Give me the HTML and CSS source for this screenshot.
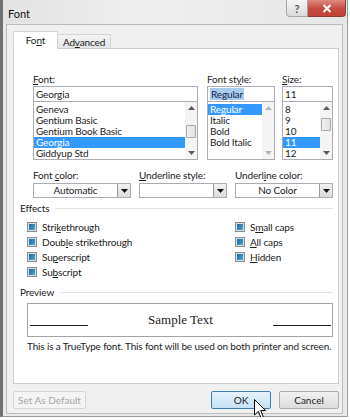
FILE: index.html
```html
<!DOCTYPE html>
<html lang="en">
<head>
  <meta charset="UTF-8" />
  <title>Font</title>
  <link rel="stylesheet" href="styles.css">
</head>
<body>
  <div class="window">
    <div class="titlebar">
      <span class="title">Font</span>
      <div class="caption">
        <span class="cap-btn help">?</span>
        <span class="cap-btn close">
          <svg width="10" height="9" viewBox="0 0 10 9"><path d="M1.5 1 L8.5 8 M8.5 1 L1.5 8" stroke="#fff" stroke-width="2"/></svg>
        </span>
      </div>
    </div>

    <div class="client">
      <div class="tabs">
        <div class="tab active"><span>Fo<u>n</u>t</span></div>
        <div class="tab"><span>Ad<u>v</u>anced</span></div>
      </div>

      <div class="panel">
        <div class="font-row">
          <div class="field f-name">
            <span class="lbl"><u>F</u>ont:</span>
            <div class="textbox">Georgia</div>
            <div class="listbox">
              <ul>
                <li>Geneva</li>
                <li>Gentium Basic</li>
                <li>Gentium Book Basic</li>
                <li class="sel">Georgia</li>
                <li>Giddyup Std</li>
              </ul>
              <div class="sb">
                <span class="sb-arrow"><svg width="7" height="4" viewBox="0 0 7 4"><path d="M0 4 L3.5 0 L7 4 Z" fill="#5a5a5a"/></svg></span>
                <span class="thumb t-name"></span>
                <span class="sb-fill"></span>
                <span class="sb-arrow"><svg width="7" height="4" viewBox="0 0 7 4"><path d="M0 0 L3.5 4 L7 0 Z" fill="#5a5a5a"/></svg></span>
              </div>
            </div>
          </div>

          <div class="field f-style">
            <span class="lbl">Font st<u>y</u>le:</span>
            <div class="textbox"><span class="hl">Regular</span></div>
            <div class="listbox">
              <ul>
                <li class="sel">Regular</li>
                <li>Italic</li>
                <li>Bold</li>
                <li>Bold Italic</li>
              </ul>
              <div class="sb">
                <span class="sb-arrow"><svg width="7" height="4" viewBox="0 0 7 4"><path d="M0 4 L3.5 0 L7 4 Z" fill="#b5b5b5"/></svg></span>
                <span class="sb-fill"></span>
                <span class="sb-arrow"><svg width="7" height="4" viewBox="0 0 7 4"><path d="M0 0 L3.5 4 L7 0 Z" fill="#b5b5b5"/></svg></span>
              </div>
            </div>
          </div>

          <div class="field f-size">
            <span class="lbl"><u>S</u>ize:</span>
            <div class="textbox">11</div>
            <div class="listbox">
              <ul>
                <li>8</li>
                <li>9</li>
                <li>10</li>
                <li class="sel">11</li>
                <li>12</li>
              </ul>
              <div class="sb">
                <span class="sb-arrow"><svg width="7" height="4" viewBox="0 0 7 4"><path d="M0 4 L3.5 0 L7 4 Z" fill="#5a5a5a"/></svg></span>
                <span class="thumb t-size"></span>
                <span class="sb-fill"></span>
                <span class="sb-arrow"><svg width="7" height="4" viewBox="0 0 7 4"><path d="M0 0 L3.5 4 L7 0 Z" fill="#5a5a5a"/></svg></span>
              </div>
            </div>
          </div>
        </div>

        <div class="combo-row">
          <div class="field c-color">
            <span class="lbl">Font <u>c</u>olor:</span>
            <div class="combo"><span class="combo-text">Automatic</span><span class="combo-btn"><svg width="7" height="4" viewBox="0 0 7 4"><path d="M0 0 L3.5 4 L7 0 Z" fill="#111"/></svg></span></div>
          </div>
          <div class="field c-style">
            <span class="lbl"><u>U</u>nderline style:</span>
            <div class="combo"><span class="combo-text"></span><span class="combo-btn"><svg width="7" height="4" viewBox="0 0 7 4"><path d="M0 0 L3.5 4 L7 0 Z" fill="#111"/></svg></span></div>
          </div>
          <div class="field c-color">
            <span class="lbl">Underl<u>i</u>ne color:</span>
            <div class="combo"><span class="combo-text">No Color</span><span class="combo-btn"><svg width="7" height="4" viewBox="0 0 7 4"><path d="M0 0 L3.5 4 L7 0 Z" fill="#111"/></svg></span></div>
          </div>
        </div>

        <div class="group-head effects-head">Effects</div>
        <div class="checks">
          <div class="check"><span class="box"></span><span>Stri<u>k</u>ethrough</span></div>
          <div class="check"><span class="box"></span><span>S<u>m</u>all caps</span></div>
          <div class="check"><span class="box"></span><span>Doub<u>l</u>e strikethrough</span></div>
          <div class="check"><span class="box"></span><span><u>A</u>ll caps</span></div>
          <div class="check"><span class="box"></span><span>Su<u>p</u>erscript</span></div>
          <div class="check"><span class="box"></span><span><u>H</u>idden</span></div>
          <div class="check"><span class="box"></span><span>Su<u>b</u>script</span></div>
        </div>

        <div class="group-head preview-head">Preview</div>
        <div class="preview">
          <span class="pv-line"></span>
          <span class="pv-text">Sample Text</span>
          <span class="pv-line"></span>
        </div>
        <p class="note">This is a TrueType font. This font will be used on both printer and screen.</p>
      </div>

      <div class="buttons">
        <button class="btn btn-default" disabled>Set As Default</button>
        <button class="btn btn-ok">OK
          <svg class="cursor" width="13" height="20" viewBox="0 0 13 20"><path d="M0.5 0.5 L0.5 16 L4.3 12.4 L7 18.8 L9.3 17.8 L6.7 11.6 L11.6 11.6 Z" fill="#fff" stroke="#000" stroke-width="1" stroke-linejoin="round"/></svg>
        </button>
        <button class="btn btn-cancel">Cancel</button>
      </div>
    </div>
  </div>
</body>
</html>
```

FILE: styles.css
```css
* { box-sizing: border-box; }
body {
  margin: 0; background: #fff; color: #1b1b1b;
  font-family: Lato, "Liberation Sans", sans-serif; font-size: 10px; letter-spacing: -0.15px;
}
u { text-decoration-thickness: 1px; text-underline-offset: 1px; }

.window {
  width: 348px; background: #e9e9e9;
  border-left: 3px solid #707070; border-right: 1px solid #9a9a9a; border-bottom: 1px solid #9a9a9a;
  padding-bottom: 2px;
}
.titlebar {
  height: 24px; display: flex; align-items: flex-start;
  background: linear-gradient(90deg, #e2e2e2, #efefef 40%, #e6e6e6);
}
.title { padding: 7px 0 0 5px; font-size: 11px; color: #111; letter-spacing: 0; }
.caption { margin-left: auto; margin-right: 1px; display: flex; }
.cap-btn { height: 17px; display: flex; align-items: center; justify-content: center; }
.help {
  width: 22px; border: 1px solid #a5a5a5; border-top: 0; border-radius: 0 0 0 4px;
  background: linear-gradient(#f6f6f6, #dadada); color: #555; font-weight: bold; font-size: 11px;
}
.close {
  width: 38px; border: 1px solid #8f3b34; border-top: 0; border-left: 0; border-radius: 0 0 4px 0;
  background: linear-gradient(#e08a80, #c7483e 55%, #c0443b);
}

.client {
  margin: 0 4px 0 3px; border: 1px solid #bcbcbc; background: #f0f0f0;
  padding: 6px 3px 4px 6px;
}
.tabs { display: flex; align-items: flex-end; height: 17px; }
.tab {
  display: flex; align-items: center; justify-content: center;
  border: 1px solid #d4d4d4; border-bottom: 0;
}
.tab.active {
  width: 45px; height: 18px; margin-bottom: -1px; background: #fff;
  position: relative; z-index: 1; padding-bottom: 2px;
}
.tab:not(.active) {
  width: 53px; height: 14px; border-left: 0;
  background: linear-gradient(#f4f4f4, #e4e4e4);
}

.panel {
  height: 336px; background: #fff; border: 1px solid #cdcdcd;
  padding: 24px 5px 0 6px;
}
.field { display: flex; flex-direction: column; }
.lbl { display: block; height: 12px; line-height: 12px; margin-bottom: 1px; }

.font-row { display: flex; margin-left: 13px; }
.f-name { width: 165px; }
.f-style { width: 68px; margin-left: 9px; }
.f-size { width: 51px; margin-left: 7px; }
.textbox {
  height: 16px; border: 1px solid #abadb3; padding: 0 2px; line-height: 14px; background: #fff;
}
.hl { background: #a8cbee; color: #14264a; padding: 0 1px; }
.listbox {
  height: 59px; margin-top: -1px; border: 1px solid #abadb3; display: flex; background: #fff;
}
.listbox ul { flex: 1; list-style: none; margin: 0; padding: 2px 0 0 0; }
.listbox li { height: 11px; line-height: 11px; padding-left: 2px; white-space: nowrap; }
.listbox li.sel { background: #3399ff; color: #fff; }
.sb { width: 12px; display: flex; flex-direction: column; background: #f4f4f4; }
.sb-arrow { height: 12px; display: flex; align-items: center; justify-content: center; }
.sb-fill { flex: 1; }
.thumb {
  height: 13px; margin: 0 1px; border: 1px solid #a9a9a9; border-radius: 1px;
  background: linear-gradient(90deg, #f0f0f0, #e2e2e2);
}
.t-name { margin-top: 11px; }
.t-size { margin-top: 4px; }

.combo-row { display: flex; margin: 9px 0 0 13px; }
.combo-row .lbl { margin-bottom: 2px; }
.c-color { width: 98px; }
.c-style { width: 88px; margin: 0 8px; }
.combo {
  height: 15px; border: 1px solid #abadb3; display: flex; background: #fff;
}
.combo-text { flex: 1; text-align: center; line-height: 13px; }
.combo-btn {
  width: 13px; border-left: 1px solid #9c9c9c;
  background: linear-gradient(#f1f1f1, #dcdcdc);
  display: flex; align-items: center; justify-content: center;
}

.group-head { display: flex; align-items: center; height: 12px; line-height: 12px; }
.group-head::after {
  content: ""; flex: 1; border-top: 1px solid #e0e0e0; margin-left: 6px;
}
.effects-head { margin-top: 4px; }
.checks {
  display: grid; grid-template-columns: 208px auto; grid-auto-rows: 15px;
  margin: 5px 0 0 7px;
}
.check { display: flex; align-items: center; gap: 5px; }
.box {
  width: 10px; height: 10px; border: 1px solid #8a8d8f; padding: 1px;
  background: linear-gradient(135deg, #1a689f, #4aa9d3) content-box, #d9dde0;
}

.preview-head { margin-top: 7px; }
.preview {
  height: 34px; width: 306px; margin: 5px 0 0 7px; border: 1px solid #a3a3a3;
  display: flex; align-items: center; justify-content: space-between; padding: 0 1px 0 2px;
}
.pv-line { width: 58px; height: 1px; background: #222; margin-top: 10px; }
.pv-text { font-family: "Liberation Serif", serif; font-size: 13px; color: #222; letter-spacing: 0; }
.note { margin: 3px 0 0 7px; line-height: 12px; color: #1b1b1b; white-space: nowrap; }

.buttons { display: flex; margin-top: 7px; }
.btn {
  height: 18px; width: 60px; border: 1px solid #acacac; border-radius: 2px;
  background: linear-gradient(#f2f2f2, #dcdcdc); font: inherit; color: #1b1b1b; padding: 0;
}
.btn-default { width: 73px; color: #a6a6a6; background: #f4f4f4; border-color: #d6d6d6; }
.btn-ok {
  margin-left: auto; position: relative;
  background: linear-gradient(#e6f2fc, #c6e1f6); border-color: #3c7fb1;
}
.btn-cancel { margin-left: 8px; }
.cursor { position: absolute; left: 42px; top: 7px; }
```
